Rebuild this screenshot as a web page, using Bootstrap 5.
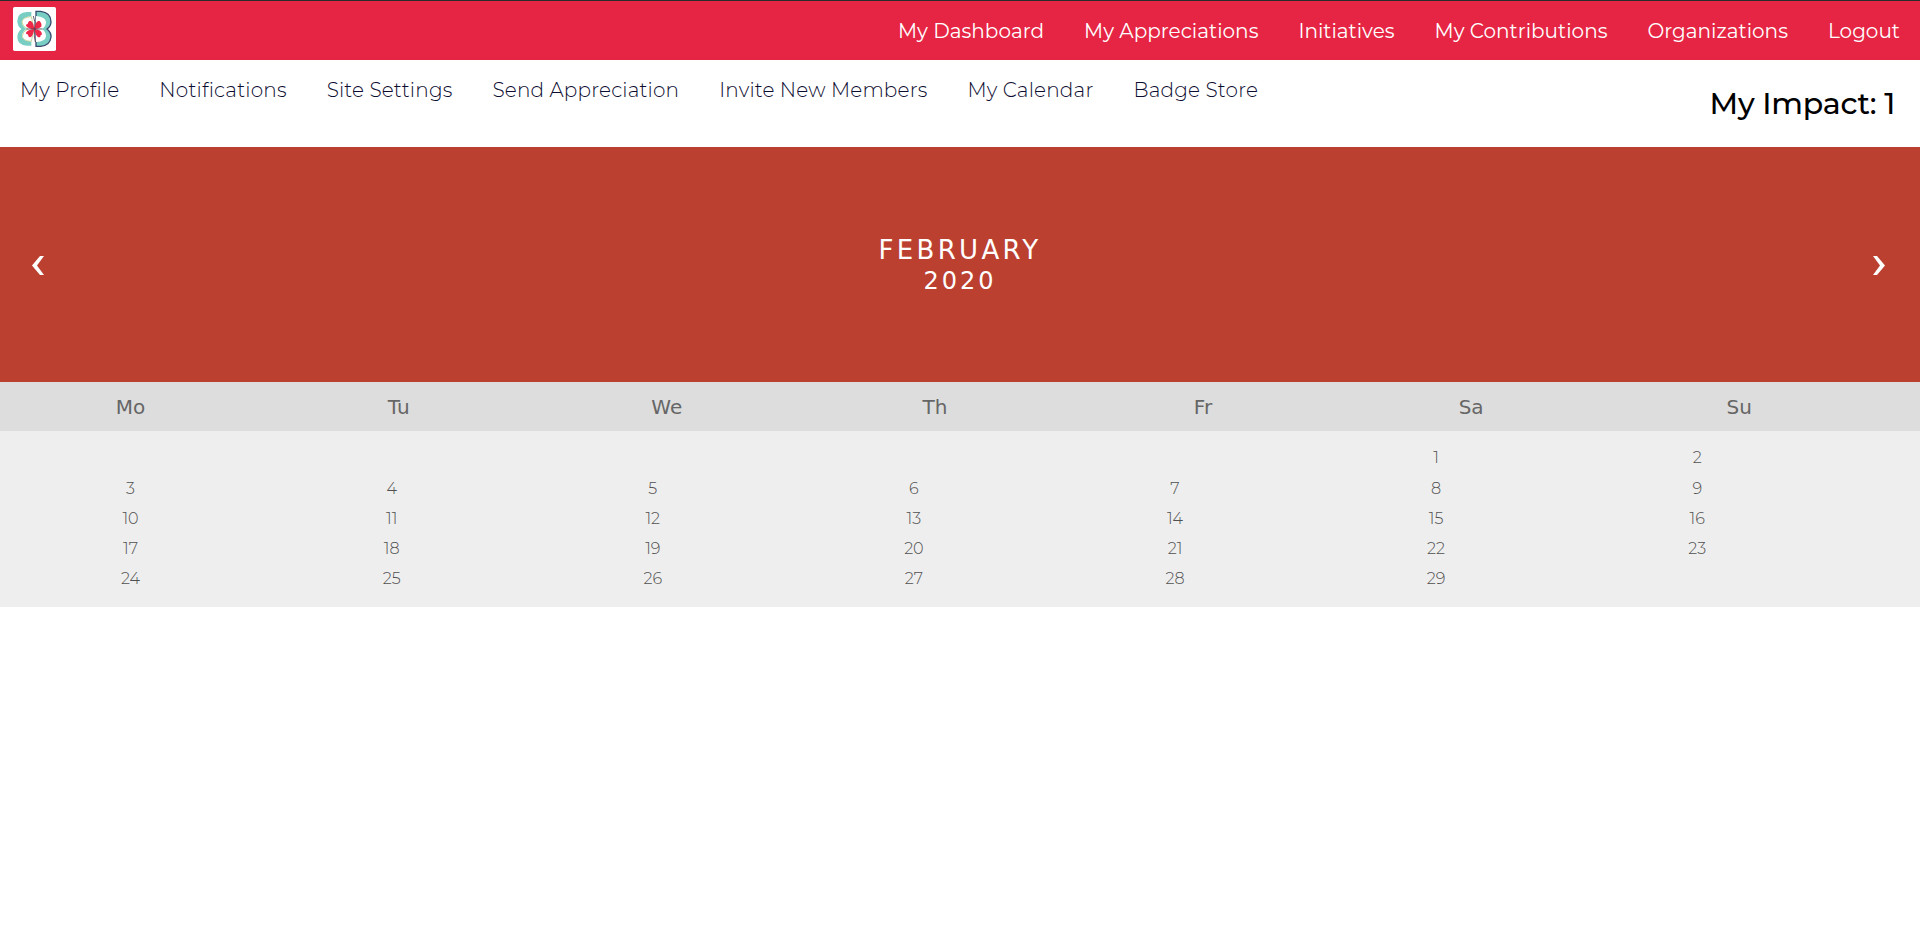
<!DOCTYPE html>
<html lang="en">
<head>
<meta charset="utf-8">
<title>My Calendar</title>
<link href="https://cdn.jsdelivr.net/npm/bootstrap@5.3.0/dist/css/bootstrap.min.css" rel="stylesheet">
<style>
  body { font-family: Montserrat, Inter, sans-serif; background: #fff; overflow-x: hidden; }
  .topbar { height: 60px; background: #e62544; border-top: 1px solid #2b2b2b; padding: 0 20px 0 13px; }
  .brand-logo { width: 43px; height: 44px; display: block; margin-top: -3px; }
  .menu { gap: 40px; font-size: 20px; line-height: 24px; }
  .topbar .menu { padding-top: 1px; letter-spacing: .015px; }
  .menu a { text-decoration: none; white-space: nowrap; display: block; }
  .topbar .menu a { color: #fff; }
  .subbar { height: 87px; padding: 18px 20px 0; }
  .subbar .menu { letter-spacing: .18px; }
  .subbar .menu a { color: #0c0c30; font-weight: 300; }
  .impact { font-size: 30px; font-weight: 500; line-height: 36px; letter-spacing: -.25px; color: #000; margin: 8px 5px 0 0; white-space: nowrap; }
  .month { height: 235px; background: #bb4030; color: #fff; padding: 2px 32px 0; font-family: "DejaVu Sans", sans-serif; letter-spacing: 3px; text-transform: uppercase; }
  .month-name { font-size: 26px; line-height: 31px; padding-left: 3px; letter-spacing: 3.3px; }
  .month-year { font-size: 24px; line-height: 31px; padding-left: 3px; }
  .weekdays { height: 49px; background: #ddd; color: #666; font: 20px/49px "DejaVu Sans", sans-serif; column-gap: 7px; padding-top: 1px; }
  .days { height: 176px; background: #eee; color: #505050; padding-top: 12px; font-size: 16px; font-weight: 300; line-height: 30px; grid-auto-rows: 30px; grid-template-rows: 31px; }
  .week-grid { display: grid; grid-template-columns: repeat(7, 261.12px); text-align: center; }
  .first-sat { grid-column: 6; }
</style>
</head>
<body>
<header class="topbar d-flex align-items-center justify-content-between">
  <a href="#" aria-label="Home">
    <svg class="brand-logo" viewBox="0 0 129 132">
      <rect width="129" height="132" rx="5" fill="#fff"/>
      <path d="M55 15H42Q13 17 13 42Q13 57 25 66Q13 76 13 91Q14 115 42 116H55V103Q29 103 27 88Q27 74 40 66Q27 58 27 43Q31 29 55 28Z" fill="#78cec3"/>
      <path d="M69 13H83Q114 17 114 44Q114 57 102 66Q115 77 114 90Q111 116 83 118H69Z" fill="#78cec3" stroke="#39496f" stroke-width="4"/>
      <path d="M69 27Q98 30 99 45Q99 60 86 66Q99 73 99 88Q98 104 69 105Z" fill="#fff"/>
      <path d="M55 29Q27 31 27 46Q28 58 44 66Q28 74 28 88Q30 102 55 103L63 66Z" fill="#fff" stroke="#c7d8a0" stroke-width="3"/>
      <path d="M64 66C61 44 54 40 48 43Q45 47 44 51Q38 51 39 56Q46 66 64 66ZM64 66C67 43 76 39 81 43Q87 50 85 59Q78 66 64 66ZM64 66Q44 68 39 77Q38 82 44 82Q46 91 52 91Q60 88 64 66ZM64 66Q82 68 86 77Q89 83 83 85Q83 92 77 91Q68 88 64 66Z" fill="#ef2749"/>
      <path d="M61 27Q68 43 65 66Q62 88 67 105M40 66H88" fill="none" stroke="#4a3948" stroke-width="2.5"/>
    </svg>
  </a>
  <nav class="menu d-flex">
    <a href="#">My Dashboard</a>
    <a href="#">My Appreciations</a>
    <a href="#">Initiatives</a>
    <a href="#">My Contributions</a>
    <a href="#">Organizations</a>
    <a href="#">Logout</a>
  </nav>
</header>
<div class="subbar d-flex align-items-start justify-content-between">
  <nav class="menu d-flex">
    <a href="#">My Profile</a>
    <a href="#">Notifications</a>
    <a href="#">Site Settings</a>
    <a href="#">Send Appreciation</a>
    <a href="#">Invite New Members</a>
    <a href="#">My Calendar</a>
    <a href="#">Badge Store</a>
  </nav>
  <h2 class="impact">My Impact: 1</h2>
</div>
<main>
  <section class="month d-flex align-items-center justify-content-between">
    <svg width="12" height="20" viewBox="0 0 12 20"><path d="M8 0H12L5 9.5L12 19H8L0 9.5Z" fill="#fff"/></svg>
    <div class="text-center">
      <div class="month-name">February</div>
      <div class="month-year">2020</div>
    </div>
    <svg width="15" height="20" viewBox="0 0 15 20"><path d="M0 0H4L12 9.5L4 19H0L7 9.5Z" fill="#fff"/></svg>
  </section>
  <div class="weekdays week-grid">
    <div>Mo</div><div>Tu</div><div>We</div><div>Th</div><div>Fr</div><div>Sa</div><div>Su</div>
  </div>
  <div class="days week-grid">
    <div class="first-sat">1</div><div>2</div>
    <div>3</div><div>4</div><div>5</div><div>6</div><div>7</div><div>8</div><div>9</div>
    <div>10</div><div>11</div><div>12</div><div>13</div><div>14</div><div>15</div><div>16</div>
    <div>17</div><div>18</div><div>19</div><div>20</div><div>21</div><div>22</div><div>23</div>
    <div>24</div><div>25</div><div>26</div><div>27</div><div>28</div><div>29</div>
  </div>
</main>
<script src="https://cdn.jsdelivr.net/npm/bootstrap@5.3.0/dist/js/bootstrap.bundle.min.js"></script>
</body>
</html>
